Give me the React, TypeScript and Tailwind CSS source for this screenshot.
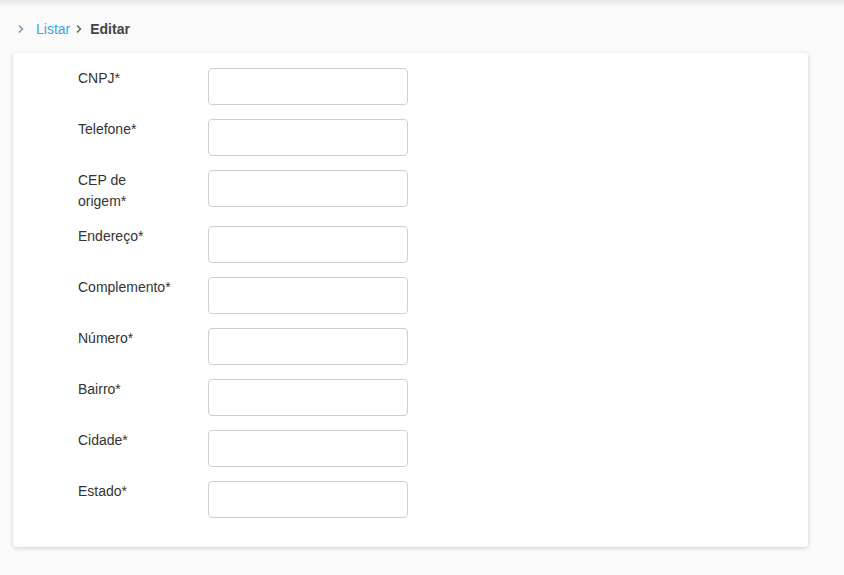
import React from 'react';

const fields = [
  'CNPJ*',
  'Telefone*',
  'CEP de origem*',
  'Endereço*',
  'Complemento*',
  'Número*',
  'Bairro*',
  'Cidade*',
  'Estado*',
];

const Chevron = ({ className }: { className: string }) => (
  <svg width="8" height="10" viewBox="0 0 8 10" className={className} fill="none">
    <path d="M2 1.5 L5.5 5 L2 8.5" stroke="currentColor" strokeWidth="1.6" />
  </svg>
);

const App = () => {
  return (
    <div
      className="min-h-[575px] w-full bg-[#fafafa] relative"
      style={{ fontFamily: '"Liberation Sans", Arial, sans-serif' }}
    >
      {/* sombra do header */}
      <div className="absolute top-0 left-0 right-0 h-[7px] bg-gradient-to-b from-[#e6e6e8] to-transparent" />

      <nav className="flex items-center h-[56px] pl-[17px] pt-[2px] text-[14px]">
        <Chevron className="text-[#7d9cb3] mr-[11px]" />
        <span className="text-[#3ea6e3]">Listar</span>
        <Chevron className="text-[#666] ml-[5px] mr-[7px]" />
        <span className="font-bold text-[#444]">Editar</span>
      </nav>

      <div className="ml-[13px] w-[795px] bg-white rounded-[4px] shadow-[0_1px_4px_rgba(0,0,0,0.18)] pl-[65px] pt-[15px] pb-[29px] flex flex-col gap-[14px] -mt-[3px]">
        {fields.map((label) => (
          <div key={label} className="flex items-start">
            <label className="w-[96px] text-[14px] leading-[21px] text-[#333] mr-[34px]">{label}</label>
            <input
              type="text"
              className="w-[200px] h-[37px] border border-[#ccd0d6] rounded-[4px] bg-white outline-none px-2"
            />
          </div>
        ))}
      </div>
    </div>
  );
};

export default App;
